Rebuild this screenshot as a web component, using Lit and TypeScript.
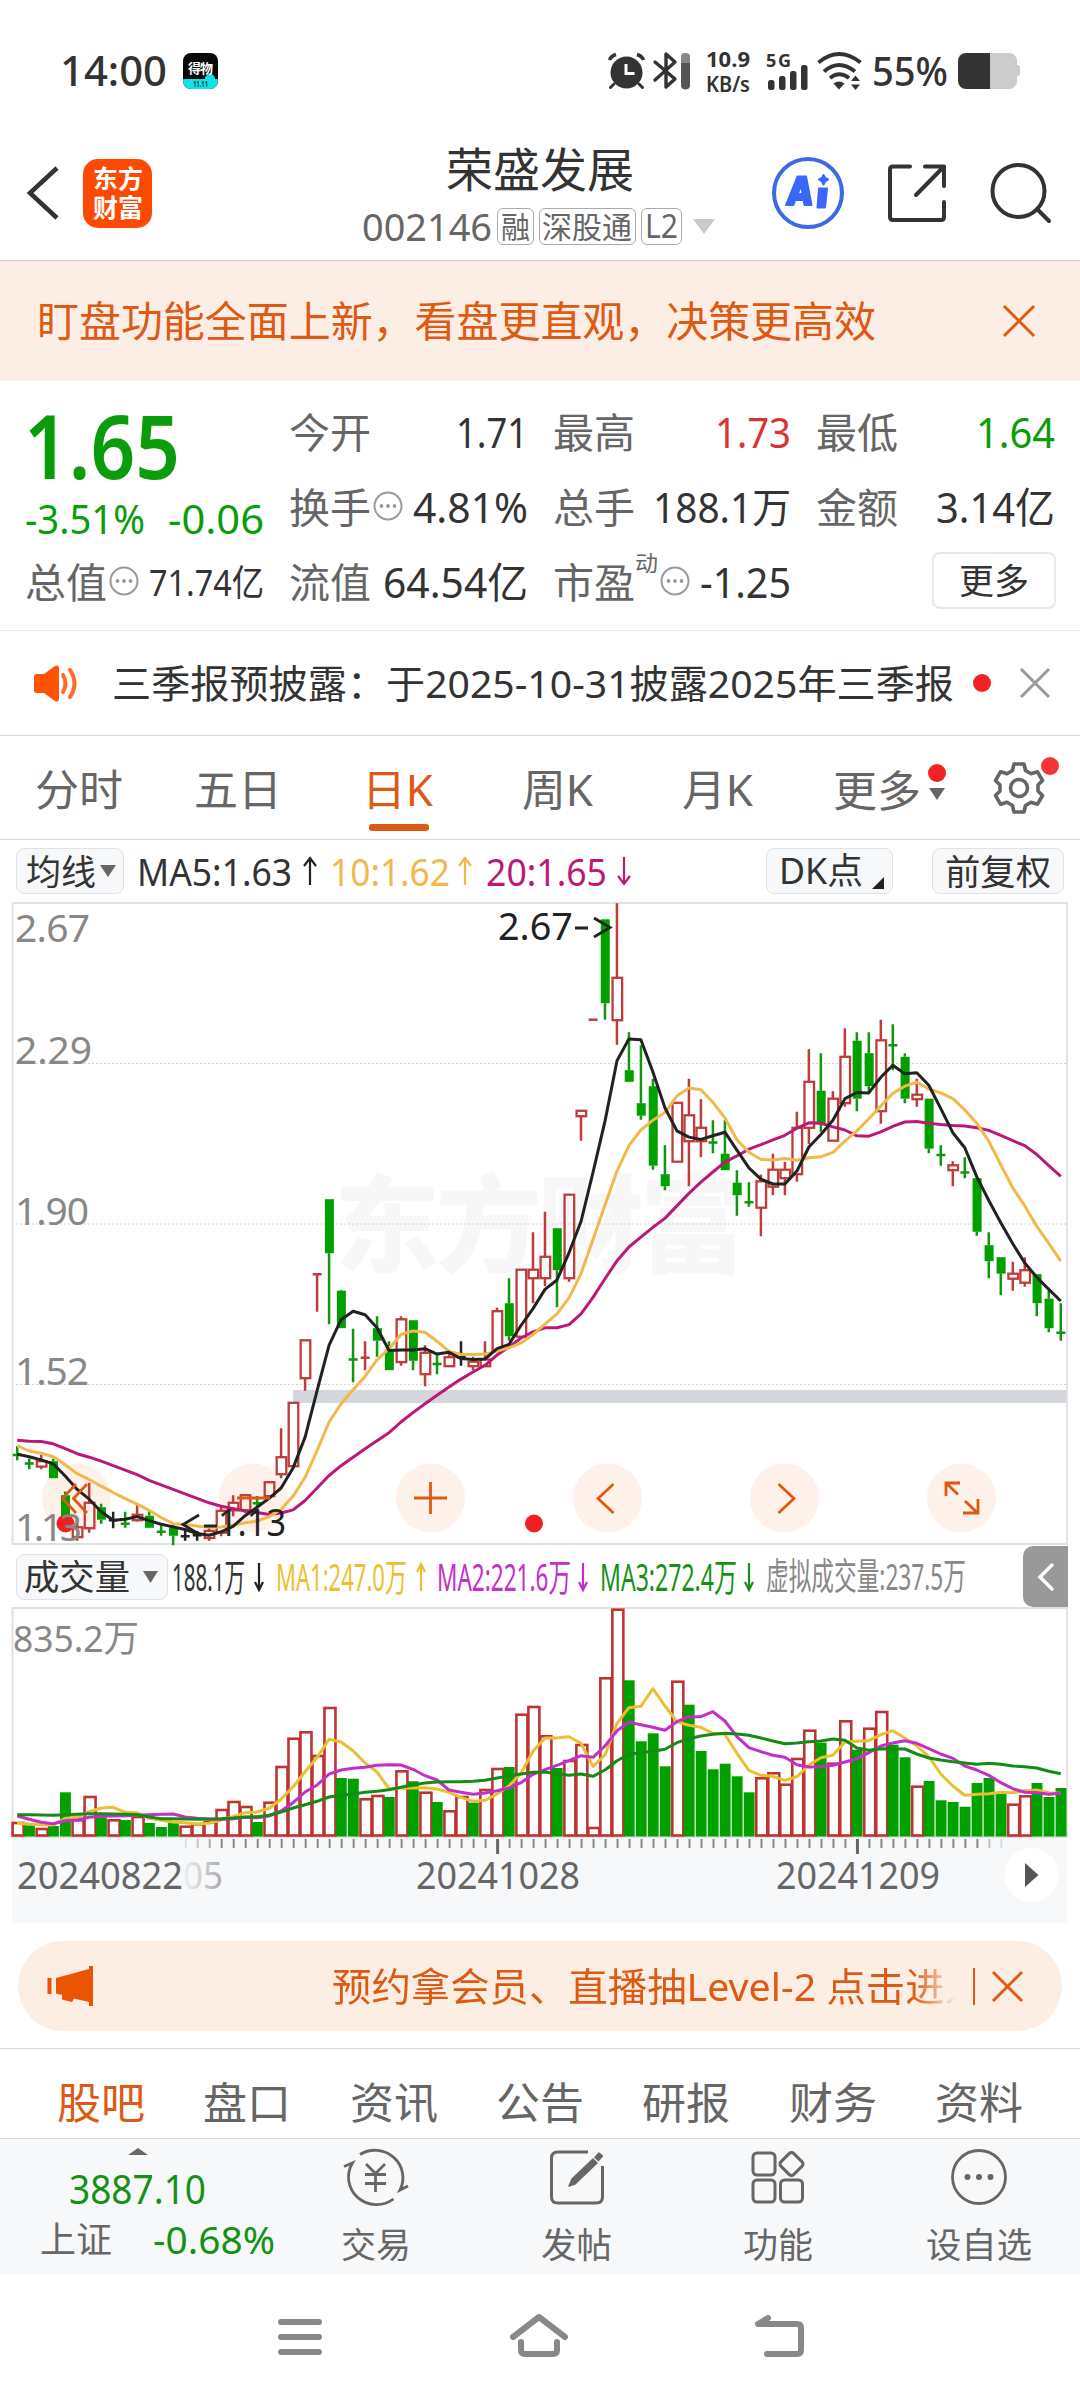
import { LitElement, html, svg, css, nothing } from "lit";
import { customElement } from "lit/decorators.js";

/** One line of text drawn at an exact advance width, centred on its cap height. */
const txt = (s: string, width: number, size: number, cls = "") => html`
  <svg class="txt ${cls}" width=${width} height=${Math.round(size * 1.16)}>
    <text x="0" y=${(Math.round(size * 1.16) / 2 + size * 0.372).toFixed(1)} font-size=${size}
      textLength=${width} lengthAdjust="spacingAndGlyphs">${s}</text>
  </svg>`;

const base = css`
  :host { display: block; font-family: "Noto Sans", "Noto Sans CJK SC", sans-serif; }
  * { box-sizing: border-box; }
  svg { display: block; flex: none; overflow: visible; }
  text { font-family: "Noto Sans", "Noto Sans CJK SC", sans-serif; white-space: pre; }
  .txt { fill: #333; }
  .txt.gray { fill: #666; }
  .txt.mute { fill: #888; }
  .txt.green { fill: #0a9c0a; }
  .txt.red { fill: #d93333; }
  .txt.orange { fill: #dc5a14; }
  .txt.bold { font-weight: 700; }
  .txt.semi { font-weight: 600; }
  .txt.mid { font-weight: 500; }
  .txt.white { fill: #fff; }
`;

/* ---------- price data: kind, body top, body bottom, high, low (2.24 ticks per px) ---------- */
type Candle = [string, number, number, number, number];
const candles: Candle[] = [
  ["g",1288,1288,1268,1300],["g",1307,1307,1296,1320],["r",1302,1314,1288,1320],["g",1302,1340,1296,1340],
  ["g",1378,1430,1370,1440],["r",1450,1472,1430,1480],["r",1395,1452,1350,1462],["g",1405,1433,1397,1442],
  ["k",1434,1434,1415,1452],["g",1442,1442,1415,1451],["r",1422,1434,1398,1437],["g",1424,1451,1414,1451],
  ["g",1460,1460,1446,1469],["g",1450,1469,1442,1490],["k",1470,1470,1458,1480],["k",1468,1468,1458,1480],
  ["r",1458,1474,1450,1480],["r",1413,1462,1405,1470],["r",1395,1412,1378,1425],["r",1378,1412,1376,1418],
  ["g",1396,1396,1380,1408],["r",1349,1380,1349,1384],["r",1293,1331,1228,1340],["r",1171,1313,1171,1313],
  ["r",1031,1116,1031,1144],["r",883,883,883,967],["g",715,836,715,995],["g",920,1004,918,1004],
  ["g",1074,1074,1005,1125],["r",1070,1070,1033,1098],["g",1004,1032,977,1068],["g",1052,1098,1033,1098],
  ["r",984,1080,977,1088],["g",986,1077,986,1098],["r",1059,1107,1042,1134],["g",1084,1084,1062,1107],
  ["r",1069,1089,1062,1089],["k",1069,1069,1033,1088],["r",1079,1089,1068,1098],["r",1074,1089,1033,1089],
  ["r",966,1055,958,1055],["g",948,1022,892,1032],["r",873,1023,873,1023],["r",873,892,789,948],
  ["r",844,892,743,910],["g",780,874,780,957],["r",705,892,705,900],["r",517,529,517,584],
  ["r",313,313,313,313],["g",88,276,88,313],["r",219,314,52,369],["g",426,452,341,452],
  ["g",500,528,370,537],["g",462,640,445,649],["g",659,686,594,695],["r",499,631,499,631],
  ["r",527,585,445,686],["r",555,585,491,621],["g",588,588,538,612],["g",613,650,538,650],
  ["g",678,706,650,752],["g",722,722,677,732],["r",675,734,660,798],["r",649,687,613,706],
  ["r",649,668,632,706],["r",555,659,519,676],["r",452,555,379,592],["g",472,547,388,564],
  ["r",490,584,473,584],["r",396,500,332,508],["g",360,490,341,518],["g",388,462,341,478],
  ["r",359,518,313,546],["g",370,370,323,426],["g",396,490,388,500],["r",481,491,445,508],
  ["g",490,602,490,612],["g",616,616,594,640],["r",639,650,630,686],["g",655,655,621,668],
  ["g",668,788,668,797],["g",818,854,789,892],["g",845,882,845,930],["r",882,893,855,920],
  ["r",874,902,845,911],["g",883,948,883,977],["g",938,1004,920,1013],["g",1014,1014,948,1032],
];
const MA5 = [1286,1292,1299,1308,1335,1365,1387,1415,1434,1432,1426,1435,1443,1449,1455,1464,1468,1460,1448,1424,1405,1385,1362,1317,1248,1144,1042,985,966,974,1003,1054,1053,1053,1050,1062,1058,1072,1074,1073,1050,1040,998,960,917,896,835,765,655,540,405,356,358,430,510,562,576,581,573,565,605,645,670,681,681,652,598,570,538,490,476,477,442,415,434,432,460,512,566,600,665,718,768,815,858,890,917,943];
const MA10 = [1267,1279,1284,1292,1310,1330,1343,1358,1372,1386,1398,1412,1428,1442,1444,1447,1450,1449,1445,1440,1436,1426,1410,1380,1338,1278,1214,1173,1142,1112,1075,1050,1018,1010,1013,1033,1056,1063,1063,1062,1055,1048,1037,1018,995,972,936,882,805,728,652,595,560,538,521,484,466,470,498,533,582,610,626,627,624,628,622,620,610,585,562,535,506,478,462,453,468,477,490,515,545,585,638,690,730,776,814,854];
const MA20 = [1255,1257,1258,1263,1274,1285,1293,1302,1312,1322,1332,1345,1355,1365,1375,1385,1395,1403,1408,1413,1417,1421,1418,1411,1390,1362,1334,1312,1293,1274,1256,1238,1214,1193,1173,1154,1136,1118,1102,1087,1064,1046,1026,1012,1003,1003,996,972,935,893,853,822,800,778,758,730,702,677,654,632,618,603,593,582,572,556,544,545,553,560,573,574,564,552,542,541,545,548,550,551,555,561,572,584,595,615,640,664];

/* ---------- volume data: bar top, three averages (3 ticks per px) ---------- */
const VOL = "r846 g856 r864 g858 g757 r838 r768 g832 r838 g840 r828 g849 g861 g849 r857 r850 r844 r807 r783 r798 g846 r785 r678 r593 r574 r645 r501 g714 g716 r775 r765 g771 r691 g724 r755 g786 r811 r768 g788 r747 r684 g681 r521 r498 r586 g684 r660 r612 r861 r412 r206 g421 g604 g580 g679 r422 g494 g633 g688 g671 g709 g757 r712 r697 r731 r654 r569 g608 r668 r541 g629 r563 r513 g614 g652 r737 g723 g781 g786 g800 g729 g714 g762 r791 r766 g729 g771 g744".split(" ");
const VM1 = [850,852,854,855,835,832,815,804,802,817,818,835,841,846,848,852,850,840,830,818,816,805,778,740,695,652,598,606,632,669,696,746,745,744,743,747,757,772,784,781,762,738,700,634,594,594,590,610,679,645,550,503,499,446,498,545,556,562,580,583,640,691,706,709,721,710,675,653,646,606,604,602,584,572,594,618,650,702,738,766,763,761,757,758,752,750,758,760];
const VM2 = [828,838,847,851,842,840,832,829,828,827,826,824,823,822,831,835,838,838,836,832,833,828,813,788,756,735,702,690,685,682,676,674,675,688,707,720,750,757,763,759,752,744,728,703,689,676,662,647,652,618,572,547,554,562,571,545,530,530,515,543,590,623,635,646,652,674,681,680,676,666,656,638,618,609,602,610,626,642,655,678,690,706,728,746,757,758,763,760];
const VM3 = [824,824,825,826,824,823,821,821,822,823,824,831,836,836,837,838,837,836,834,831,830,826,816,804,794,784,771,766,762,757,754,749,742,735,729,726,725,725,724,721,714,708,702,697,696,701,706,702,709,690,662,643,638,634,628,608,596,588,583,580,582,586,594,603,611,609,605,603,597,601,624,631,626,627,627,642,654,660,665,669,673,670,673,678,680,684,694,701];

const cx = (i: number) => 17.2 + i * 11.995;
const py = (v: number) => +((v - 49.3) / 2.24).toFixed(1);
const vy = (v: number) => +((v - 201) / 3).toFixed(1);
const line = (a: number[], f: (v: number) => number, cls: string) =>
  svg`<polyline class="line ${cls}" points=${a.map((v, i) => `${cx(i).toFixed(1)},${f(v)}`).join(" ")} />`;

@customElement("price-chart")
export class PriceChart extends LitElement {
  static styles = [base, css`
    .g { fill: #00a000; stroke: #0f970f; }
    .r { fill: #fff; stroke: #be3c39; }
    .hollow { fill: none; stroke-width: 2.3; }
    .k { fill: #222; stroke: #222; }
    .wick { stroke-width: 2.5; }
    .solid { stroke: none; }
    .line { fill: none; stroke-width: 3; stroke-linejoin: round; }
    .black { stroke: #222; }
    .gold { stroke: #f2b84b; }
    .pink { stroke: #bb1878; }
    .frame { fill: none; stroke: #e2e2e2; stroke-width: 2; }
    .grid { stroke: #d2d2d2; stroke-width: 1; stroke-dasharray: 2 2; }
    .axis { fill: #888; }
    .mark { fill: #222; }
    .water { fill: #f7f7f7; font-family: "Noto Sans CJK SC", sans-serif; font-weight: 900; }
    .btn { fill: #fef1ea; }
    .glyph { fill: none; stroke: #dc5a14; stroke-width: 2.8; }
    .pointer { fill: none; stroke: #222; stroke-width: 2.8; }
    .dot { fill: #f02020; }
  `];

  candle([k, top, bot, hi, lo]: Candle, i: number) {
    const x = cx(i);
    const flat = top === bot;
    const wick = flat
      ? svg`<path class="wick ${k}" d="M${x} ${py(hi)}V${py(lo)}M${x - 4.4} ${py(top)}h9" />`
      : svg`<path class="wick ${k}" d="M${x} ${py(hi)}V${py(top)}M${x} ${py(bot)}V${py(lo)}" />`;
    if (flat) return wick;
    return svg`${wick}${k === "r"
      ? svg`<rect class="r hollow" x=${x - 4.4} y=${py(top)} width="9.6" height=${py(bot) - py(top)} />`
      : svg`<rect class="solid ${k}" x=${x - 4.2} y=${py(top)} width="9" height=${py(bot) - py(top)} />`}`;
  }

  render() {
    const btns = [76.5, 253, 430.5, 607.5, 784.5, 961.5];
    const glyphs = [
      "M76 582L62.500 596.500L76 611M87 582L73.500 596.500L87 611", "M237 596H270",
      "M414 596H447M430.500 580V612", "M613.500 582L598 596.500L613.500 611",
      "M778.500 582L794 596.500L778.500 611",
      "M946 594V581H960M947 582L958 592.500M978 597V611H963M976.500 610L965 599",
    ];
    return html`<svg width="1080" height="644" viewBox="0 0 1080 644">
      <text class="water" x="334" y="362" font-size="106" textLength="412">东方财富</text>
      <rect x="293" y="488" width="774" height="13" fill="#d3d6db" />
      ${[161.5, 322, 482.5].map((y) => svg`<line class="grid" x1="12" x2="1067" y1=${y} y2=${y} />`)}
      <rect class="frame" x="12.500" y="1" width="1054.500" height="641" />
      ${btns.map((x) => svg`<circle class="btn" cx=${x} cy="596" r="34.500" />`)}
      ${candles.map((c, i) => this.candle(c, i))}
      ${line(MA20, py, "pink")}${line(MA10, py, "gold")}${line(MA5, py, "black")}
      <text class="mark" x="498" y="38" font-size="39" textLength="75" lengthAdjust="spacingAndGlyphs">2.67</text>
      <path class="pointer" d="M575 26H588M594 16L610 25.500L594 35" />
      <text class="mark" x="218" y="634" font-size="39" textLength="68" lengthAdjust="spacingAndGlyphs">1.13</text>
      <path class="pointer" d="M204 624H217M199 613L183 622.500L199 632" />
      ${glyphs.map((d) => svg`<path class="glyph" d=${d} />`)}
      <circle class="dot" cx="65.500" cy="621.500" r="9" /><circle class="dot" cx="534" cy="621.500" r="9" />
      ${[["2.67", 39.5, 75], ["2.29", 162, 77], ["1.90", 322.5, 74], ["1.52", 483, 74], ["1.13", 639, 67]].map(
        ([s, y, w]) => svg`<text class="axis" x="15" y=${y} font-size="39" textLength=${w}>${s}</text>`)}
    </svg>`;
  }
}

@customElement("volume-chart")
export class VolumeChart extends LitElement {
  static styles = [base, css`
    .up { fill: #fff; stroke: #be3433; stroke-width: 2.6; }
    .down { fill: #00a000; }
    .line { fill: none; stroke-width: 3; stroke-linejoin: round; }
    .gold { stroke: #eac030; }
    .violet { stroke: #c32fc8; }
    .green { stroke: #168a16; }
    .frame { fill: none; stroke: #e2e2e2; stroke-width: 2; }
    .axis { fill: #888; }
    .panel { fill: #f7f8fa; }
    .tick { stroke: #888; stroke-width: 2; }
    .major { stroke: #666; stroke-width: 3; }
    .date { fill: #666; }
    .faded { fill: url(#fade); }
  `];

  render() {
    return html`<svg width="1080" height="316" viewBox="0 0 1080 316">
      <defs><linearGradient id="fade"><stop offset="0" stop-color="#f0f0f0" /><stop offset="1" stop-color="#aaa" /></linearGradient></defs>
      <rect class="panel" x="12" y="230" width="1055" height="86" />
      <rect class="frame" x="12.500" y="1" width="1054.500" height="229" />
      ${VOL.map((s, i) => {
        const y = vy(+s.slice(1));
        return s[0] === "r"
          ? svg`<rect class="up" x=${cx(i) - 4.6} y=${y + 1} width="11" height=${227.5 - y} />`
          : svg`<rect class="down" x=${cx(i) - 5.2} y=${y} width="10.900" height=${229.5 - y} />`;
      })}
      ${line(VM1, vy, "gold")}${line(VM2, vy, "violet")}${line(VM3, vy, "green")}
      ${Array.from({ length: 69 }, (_, k) => {
        const i = k + 14;
        const major = i === 40 || i === 70;
        const fade = i < 17 ? (i - 13) * 0.22 : i > 80 ? (83 - i) * 0.25 : 1;
        return svg`<line class=${major ? "major" : "tick"} opacity=${fade} x1=${cx(i) + 0.6} x2=${cx(i) + 0.6} y1="232" y2=${major ? 247 : 241} />`;
      })}
      <text class="axis" x="13" y="45" font-size="37" textLength="126" lengthAdjust="spacingAndGlyphs">835.2万</text>
      <text class="date" x="17" y="282" font-size="38.500" textLength="166" lengthAdjust="spacingAndGlyphs">20240822</text>
      <text class="faded" x="183" y="282" font-size="38.500" textLength="40" lengthAdjust="spacingAndGlyphs">05</text>
      <text class="date" x="416" y="282" font-size="38.500" textLength="164" lengthAdjust="spacingAndGlyphs">20241028</text>
      <text class="date" x="776" y="282" font-size="38.500" textLength="164" lengthAdjust="spacingAndGlyphs">20241209</text>
      <circle cx="1031.500" cy="268" r="27" fill="#fff" />
      <path d="M1025 256L1038.500 268L1025 280Z" fill="#555" />
    </svg>`;
  }
}

@customElement("app-root")
export class AppRoot extends LitElement {
  static styles = [base, css`
    :host { width: 1080px; height: 2400px; background: #fff; overflow: hidden; }
    .row { display: flex; align-items: center; }
    .status { height: 130px; padding: 12px 60px 0 60px; }
    .grow { flex: 1; }
    .app { width: 35px; height: 36px; margin-left: 16px; border-radius: 8px; overflow: hidden; }
    .bt { margin-left: 7px; }
    .speed { display: flex; flex-direction: column; margin-left: 15px; }
    .signal { margin-left: 16px; }
    .wifi { margin-left: 8px; }
    .pct { margin-left: 10px; }
    .batt { margin-left: 9px; }
    .header { height: 131px; padding: 0 29px 4px 27px; border-bottom: 1px solid #ccc; }
    .logo { width: 69px; height: 69px; margin-left: 24px; border-radius: 15px; background: #fd4a02;
      display: flex; flex: none; flex-direction: column; align-items: center; justify-content: center; }
    .title { width: 440px; margin-left: 168px; padding-top: 5px; display: flex; flex-direction: column; align-items: center; gap: 7px; }
    .codes { display: flex; align-items: center; gap: 5px; margin-left: -4px; }
    .tag { display: flex; align-items: center; justify-content: center; height: 37px; border: 1.5px solid #aaa; border-radius: 6px; }
    .tag.a { width: 37px; }
    .tag.b { width: 97px; }
    .tag.c { width: 41px; }
    .caret { margin-left: 6px; }
    .icons { display: flex; align-items: center; }
    .share { margin-left: 43px; }
    .search { margin-left: 45px; }
    .banner { height: 120px; padding: 0 45px 0 37px; background: #fceee5; justify-content: space-between; }
    .quote { height: 250px; padding: 14px 26px 0; border-bottom: 1px solid #e9e9e9;
      display: grid; grid-template-columns: 236px 237px 236px 237px; column-gap: 27px; }
    .last { display: flex; flex-direction: column; }
    .big { height: 101px; display: flex; align-items: center; margin-left: -2px; }
    .chg { height: 46px; justify-content: space-between; margin-left: -1px; margin-right: -2px; }
    .cell { height: 75px; display: flex; align-items: center; margin-right: -2px; }
    .last .cell { margin-top: 3px; margin-left: -1px; }
    .col { display: flex; flex-direction: column; }
    .info { margin: -4px 0 0 2px; }
    .sup { margin-top: -40px; }
    .more { width: 124px; height: 57px; margin: 7px -3px 0 auto; border: 2px solid #e6e8ea; border-radius: 8px;
      display: flex; align-items: center; justify-content: center; }
    .notice { height: 105px; padding: 0 30px 0 34px; border-bottom: 1px solid #d6d6d6; }
    .speech { margin-left: 34px; }
    .reddot { width: 18px; height: 18px; border-radius: 9px; background: #f02222; margin: 0 29px 0 19px; }
    .tabs { height: 104px; border-bottom: 1px solid #d6d6d6; }
    .tab { width: 159.600px; height: 103px; display: flex; flex-direction: column; align-items: center; padding-top: 29px; }
    .tab .txt { margin-left: -2px; }
    .bar { width: 60px; height: 7px; border-radius: 3px; background: #dc5a14; margin-top: 9px; }
    .moretab { margin-left: 35px; padding-top: 6px; }
    .drop { display: flex; flex-direction: column; align-items: center; gap: 6px; margin: 0 0 11px 7px; }
    .drop i { width: 18px; height: 18px; border-radius: 9px; background: #f02222; }
    .gear { position: relative; margin-left: 47px; }
    .gear i { position: absolute; left: 48px; top: -5px; width: 18px; height: 18px; border-radius: 9px; background: #f53535; }
    .indic { height: 62px; padding: 0 16px; }
    .chip { height: 46px; border: 1.500px solid #dfe3e8; border-radius: 8px; background: #f7f8fa; display: flex; align-items: center; }
    .pick { width: 108px; padding-left: 9px; gap: 4px; }
    .dk { width: 127px; padding-left: 12px; gap: 9px; }
    .corner { margin-top: 24px; }
    .fq { width: 132px; justify-content: center; margin-left: 39px; }
    .m4 { margin-left: 4px; } .m7 { margin-left: 7px; } .m8 { margin-left: 8px; } .m9 { margin-left: 9px; }
    .m10 { margin-left: 10px; } .m11 { margin-left: 11px; } .m12 { margin-left: 12px; } .m13 { margin-left: 13px; } .m14 { margin-left: 14px; }
    .volrow { height: 61px; padding-left: 16px; }
    .volpick { width: 152px; padding-left: 7px; gap: 13px; }
    .fold { width: 45px; height: 61px; border-radius: 10px 0 0 10px; background: #999; margin-left: auto; margin-right: 12px;
      display: flex; align-items: center; justify-content: center; }
    .txt.gold { fill: #f2b84b; }
    .txt.pink { fill: #bb1878; }
    .txt.yellow { fill: #eac030; }
    .txt.violet { fill: #c32fc8; }
    .txt.leaf { fill: #169016; }
    .promo { height: 90px; margin: 18px 18px 17px; padding: 0 38px 0 29px; border-radius: 45px; background: #fdeee4; }
    .promotext { width: 624px; margin-left: 239px; overflow: hidden;
      -webkit-mask-image: linear-gradient(90deg, #000 93%, transparent 100%); mask-image: linear-gradient(90deg, #000 93%, transparent 100%); }
    .sep { width: 2px; height: 37px; background: #dc5a14; margin: 0 17px; }
    .subtabs { height: 91px; padding: 15px 28px 0; border-top: 1px solid #d6d6d6; border-bottom: 1px solid #d6d6d6; }
    .subtab { width: 146.300px; height: 76px; padding-top: 15px; display: flex; justify-content: center; }
    .footer { height: 135px; background: #f7f8fa; align-items: flex-start; }
    .index { width: 275px; height: 135px; display: flex; flex-direction: column; align-items: center; padding-top: 9px; gap: 6px; }
    .points { margin-top: 5px; }
    .idx { width: 235px; justify-content: space-between; margin-left: 40px; }
    .act { width: 201.300px; display: flex; flex-direction: column; align-items: center; padding-top: 9px; gap: 18px; }
    .nav { height: 126px; padding: 0 276px 2px 277px; justify-content: space-between; }
  `];

  info() {
    return html`<svg class="info" width="30" height="30" fill="#999">
      <circle cx="15" cy="15" r="13.500" fill="none" stroke="#999" stroke-width="2" />
      <circle cx="8.500" cy="15" r="1.900" /><circle cx="15" cy="15" r="1.900" /><circle cx="21.500" cy="15" r="1.900" /></svg>`;
  }
  tri(w: number, h: number, c: string) {
    return html`<svg width=${w} height=${h} fill=${c}><path d="M0 0H${w}L${w / 2} ${h}Z" /></svg>`;
  }
  cross(s: number, c: string, sw = 3) {
    return html`<svg width=${s} height=${s}><path d="M1 1L${s - 1} ${s - 1}M${s - 1} 1L1 ${s - 1}" stroke=${c} stroke-width=${sw} /></svg>`;
  }
  arrow(up: boolean, w: number, c: string) {
    const m = w / 2;
    return html`<svg width=${w} height="28" fill="none" stroke=${c} stroke-width="2.200">
      <path d=${up ? `M${m} 28V1M1 9L${m} 1L${w - 1} 9` : `M${m} 0V27M1 19L${m} 27L${w - 1} 19`} /></svg>`;
  }

  status() {
    return html`<div class="row status">
      ${txt("14:00", 107, 41, "mid")}
      <svg class="app" viewBox="0 0 35 36"><rect width="35" height="36" fill="#080808" /><rect y="26" width="35" height="10" fill="#12e2e4" />
        <path d="M22 27a5 5 0 0 1 10 -2V30H22Z" fill="#12e2e4" />
        <text x="5" y="20" font-size="13" font-weight="700" fill="#fff" textLength="25">得物</text>
        <text x="10" y="34" font-size="8" font-weight="700" fill="#044" textLength="15" lengthAdjust="spacingAndGlyphs">11.11</text></svg>
      <div class="grow"></div>
      <svg width="38" height="38" viewBox="0 0 38 38"><circle cx="18.500" cy="20.500" r="16" fill="#333" />
        <path d="M6 32L2.500 35.500M31 32L34.500 35.500" stroke="#333" stroke-width="3" stroke-linecap="round" />
        <path d="M1.500 8Q3 4 8 2.500M35.500 8Q34 4 29 2.500" stroke="#333" stroke-width="3.500" fill="none" />
        <path d="M18 12V21.500H26.500" stroke="#fff" stroke-width="3" fill="none" /></svg>
      <svg class="bt" width="38" height="38" viewBox="0 0 38 38"><path d="M2 10L22 27L13 35V2L22 10L2 28" fill="none" stroke="#333" stroke-width="3.400" stroke-linejoin="round" stroke-linecap="round" />
        <rect x="28" y="1" width="9" height="36" rx="4" fill="#888" /><path d="M28 11H37V33a4 4 0 0 1 -9 0Z" fill="#555" /></svg>
      <div class="speed">${txt("10.9", 44, 22, "bold")}${txt("KB/s", 44, 21, "semi")}</div>
      <svg class="signal" width="43" height="38" viewBox="0 0 43 38" fill="#333">
        <text x="0" y="15" font-size="18" font-weight="700" textLength="25">5G</text>
        <rect x="2" y="28" width="6.500" height="10" rx="2.500" /><rect x="13" y="24" width="6.500" height="14" rx="2.500" />
        <rect x="24" y="19" width="6.500" height="19" rx="2.500" /><rect x="35" y="13" width="6.500" height="25" rx="2.500" /></svg>
      <svg class="wifi" width="45" height="38" viewBox="0 0 45 38" fill="none" stroke="#333" stroke-width="3.800">
        <path d="M1.500 10.500Q22 -6.500 43.500 10.500M7 19.500Q22 6.500 38 19.500M13 26Q22 18.500 32 26" />
        <path d="M16.500 31.500Q22 27.500 27.500 31.500L22 37.500ZM34 29L38.500 23.500L43 29ZM34 32.500L38.500 38L43 32.500Z" fill="#333" stroke="none" /></svg>
      <div class="pct">${txt("55%", 76, 39, "mid")}</div>
      <svg class="batt" width="63" height="37" viewBox="0 0 63 37"><path d="M32 0H52a8 8 0 0 1 8 8V12h1a2 2 0 0 1 2 2v7a2 2 0 0 1 -2 2h-1v5a8 8 0 0 1 -8 8H32Z" fill="#ccc" />
        <path d="M33 0H9a8 8 0 0 0 -8 8V28a8 8 0 0 0 8 8H33Z" fill="#333" /></svg>
    </div>`;
  }

  header() {
    return html`<div class="row header">
      <svg width="32" height="54"><path d="M30 2L3 27L30 52" fill="none" stroke="#333" stroke-width="4.500" /></svg>
      <div class="logo">${txt("东方", 50, 25, "semi white")}${txt("财富", 50, 25, "semi white")}</div>
      <div class="title">
        ${txt("荣盛发展", 188, 47)}
        <div class="codes">${txt("002146", 130, 38.5, "gray")}
          <div class="tag a">${txt("融", 29, 30, "gray")}</div><div class="tag b">${txt("深股通", 90, 30, "gray")}</div>
          <div class="tag c">${txt("L2", 33, 32, "gray")}</div><div class="caret">${this.tri(22, 15, "#c8c8c8")}</div></div>
      </div>
      <div class="grow"></div>
      <div class="icons">
        <svg width="74" height="74" viewBox="0 0 74 74"><circle cx="37" cy="37" r="34" fill="none" stroke="#3f68e4" stroke-width="4" />
          <path fill="#3a66fb" fill-rule="evenodd" stroke="#3a66fb" stroke-width="2" stroke-linejoin="round" d="M15 49L26.500 20.500H35L40.500 49H33.500L32.500 44H24L22.500 49ZM26.500 38H31.500L30.500 29ZM48 32.500H56L54 51.500H46.500ZM52.500 19L54 22L57 23.500L54 25.500L52.500 28.500L51 25.500L48 23.500L51 22Z" /></svg>
        <svg class="share" width="58" height="58" viewBox="0 0 58 58" fill="none" stroke="#333" stroke-width="4" stroke-linecap="round" stroke-linejoin="round">
          <path d="M22 2.500H5Q2 2.500 2 5.500V53Q2 56 5 56H53Q56 56 56 53V38M37 2.500H56V22M56 2.500L28 31" /></svg>
        <svg class="search" width="60" height="60" viewBox="0 0 60 60" fill="none" stroke="#333" stroke-width="4" stroke-linecap="round">
          <circle cx="27.500" cy="28" r="26" /><path d="M46 46L58 58" /></svg>
      </div>
    </div>`;
  }

  stat(label: string, value: string, w: number, cls = "", icon: unknown = nothing) {
    return html`<div class="cell">${txt(label, 82, 41, "gray")}${icon}<div class="grow"></div>${txt(value, w, 42, cls)}</div>`;
  }

  quote() {
    return html`<div class="quote">
      <div class="last">
        <div class="big">${txt("1.65", 156, 89, "green semi")}</div>
        <div class="row chg">${txt("-3.51%", 120, 40, "green")}${txt("-0.06", 96, 40, "green")}</div>
        <div class="cell">${txt("总值", 82, 41, "gray")}${this.info()}<div class="grow"></div>${txt("71.74亿", 115, 36)}</div>
      </div>
      <div class="col">${this.stat("今开", "1.71", 72)}${this.stat("换手", "4.81%", 115, "", this.info())}${this.stat("流值", "64.54亿", 145)}</div>
      <div class="col">${this.stat("最高", "1.73", 76, "red")}${this.stat("总手", "188.1万", 138)}${this.stat("市盈", "-1.25", 91, "",
        html`<div class="sup">${txt("动", 23, 22, "gray")}</div>${this.info()}`)}</div>
      <div class="col">${this.stat("最低", "1.64", 79, "green")}${this.stat("金额", "3.14亿", 119)}<div class="more">${txt("更多", 70, 35)}</div></div>
    </div>`;
  }

  tabs() {
    return html`<div class="row tabs">
      ${["分时", "五日", "日K", "周K", "月K"].map((t) => html`<div class="tab">
        ${txt(t, t.endsWith("K") ? 71 : 88, 43.5, t === "日K" ? "orange" : "gray")}
        ${t === "日K" ? html`<div class="bar"></div>` : nothing}</div>`)}
      <div class="row moretab">${txt("更多", 88, 43.5, "gray")}</div>
      <div class="drop"><i></i>${this.tri(16, 12, "#666")}</div>
      <div class="gear"><svg width="52" height="52" viewBox="0 0 52 52" fill="none" stroke="#666" stroke-width="3.600" stroke-linejoin="round">
        <path d="M21 2H31L32.500 8.500L38 11.700L44.500 9.800L49.500 18.500L45 23V29L49.500 33.500L44.500 42.200L38 40.300L32.500 43.500L31 50H21L19.500 43.500L14 40.300L7.500 42.200L2.500 33.500L7 29V23L2.500 18.500L7.500 9.800L14 11.700L19.500 8.500Z" />
        <circle cx="26" cy="26" r="8.500" /></svg><i></i></div>
    </div>`;
  }

  render() {
    return html`
      ${this.status()}${this.header()}
      <div class="row banner">${txt("盯盘功能全面上新，看盘更直观，决策更高效", 839, 42, "orange")}${this.cross(32, "#e05a10")}</div>
      ${this.quote()}
      <div class="row notice">
        <svg width="44" height="37" viewBox="0 0 44 37"><path d="M3 9H10L21 1Q25 -1 25 4V33Q25 38 21 36L10 28H3Q0 28 0 25V12Q0 9 3 9Z" fill="#fe5304" />
          <path d="M29 10Q34 18.500 29 27M36 5Q45 18.500 36 32" fill="none" stroke="#fe6c28" stroke-width="4" stroke-linecap="round" /></svg>
        <div class="speech">${txt("三季报预披露：于2025-10-31披露2025年三季报", 842, 38.5)}</div>
        <div class="reddot"></div><div class="grow"></div>${this.cross(30, "#999")}
      </div>
      ${this.tabs()}
      <div class="row indic">
        <div class="chip pick">${txt("均线", 70, 35)}${this.tri(16, 12, "#666")}</div>
        <div class="m13">${txt("MA5:1.63", 155, 39)}</div><div class="m11">${this.arrow(true, 14, "#222")}</div>
        <div class="m13">${txt("10:1.62", 120, 39, "gold")}</div><div class="m8">${this.arrow(true, 14, "#f2b84b")}</div>
        <div class="m14">${txt("20:1.65", 121, 39, "pink")}</div><div class="m10">${this.arrow(false, 14, "#bb1878")}</div>
        <div class="grow"></div>
        <div class="chip dk">${txt("DK点", 84, 36)}<svg class="corner" width="12" height="12"><path d="M12 0V12H0Z" fill="#222" /></svg></div>
        <div class="chip fq">${txt("前复权", 106, 35.5)}</div>
      </div>
      <price-chart></price-chart>
      <div class="row volrow">
        <div class="chip volpick">${txt("成交量", 106, 35.5)}${this.tri(15, 12, "#666")}</div>
        <div class="m4">${txt("188.1万", 73, 38)}</div><div class="m9">${this.arrow(false, 10, "#222")}</div>
        <div class="m12">${txt("MA1:247.0万", 131, 38, "yellow")}</div><div class="m9">${this.arrow(true, 10, "#eac030")}</div>
        <div class="m11">${txt("MA2:221.6万", 134, 38, "violet")}</div><div class="m7">${this.arrow(false, 10, "#c32fc8")}</div>
        <div class="m12">${txt("MA3:272.4万", 137, 38, "leaf")}</div><div class="m7">${this.arrow(false, 10, "#169016")}</div>
        <div class="m12">${txt("虚拟成交量:237.5万", 200, 37, "mute")}</div>
        <div class="fold"><svg width="16" height="28"><path d="M14 2L2 14L14 26" fill="none" stroke="#fff" stroke-width="3.500" stroke-linecap="round" /></svg></div>
      </div>
      <volume-chart></volume-chart>
      <div class="row promo">
        <svg width="46" height="40" viewBox="0 0 46 40" fill="#ea5504"><path d="M0.500 12H4.500V28H0.500ZM9 12L42 3V0H46V40H42V36L27 32.500L25 36L15 33.500V29L9 27.500Z" /></svg>
        <div class="promotext">${txt("预约拿会员、直播抽Level-2 点击进入", 652, 39, "orange")}</div>
        <div class="sep"></div>${this.cross(31, "#e05a10")}
      </div>
      <div class="row subtabs">${["股吧", "盘口", "资讯", "公告", "研报", "财务", "资料"].map(
        (t, i) => html`<div class="subtab">${txt(t, 88, 43.5, i ? "gray" : "orange")}</div>`)}</div>
      <div class="row footer">
        <div class="index"><svg width="20" height="7"><path d="M0 7L10 0L20 7Z" fill="#666" /></svg>
          <div class="points">${txt("3887.10", 137, 39.5, "leaf")}</div>
          <div class="row idx">${txt("上证", 72, 36, "gray")}${txt("-0.68%", 122, 38, "leaf")}</div></div>
        <div class="act">
          <svg width="66" height="58" viewBox="0 0 66 58" fill="none" stroke="#666" stroke-width="2.800"><path d="M17 6.500A28 27.500 0 0 1 57 42L65 38M50.500 51A28 27.500 0 0 1 9.500 15L1 18.500" />
            <path d="M23 16L32.500 25.500L42 16M32.500 25V44M22 26.500H43M22 35.500H43" /></svg>
          ${txt("交易", 70, 35.5, "gray")}</div>
        <div class="act">
          <svg width="56" height="58" viewBox="0 0 56 58" fill="none" stroke="#666" stroke-width="3"><path d="M39 4H9Q2.500 4 2.500 10V49Q2.500 55 9 55H47Q53.500 55 53.500 49V18" />
            <path d="M20 38L23 31L44 11L48 15L26 36ZM46 9.500L50 5L53.500 8L49.500 12.500Z" fill="#666" stroke="#666" stroke-width="1.500" stroke-linejoin="round" /></svg>
          ${txt("发帖", 71, 35.5, "gray")}</div>
        <div class="act">
          <svg width="54" height="58" viewBox="0 0 54 58" fill="none" stroke="#666" stroke-width="3" stroke-linejoin="round"><rect x="2" y="5" width="22" height="22" rx="4" /><rect x="2" y="32" width="22" height="22" rx="4" />
            <rect x="29.500" y="32" width="22" height="22" rx="4" /><rect x="31.500" y="7" width="18" height="18" rx="3" transform="rotate(45 40.500 16)" /></svg>
          ${txt("功能", 70, 35.5, "gray")}</div>
        <div class="act">
          <svg width="56" height="58" viewBox="0 0 56 58" fill="#666"><circle cx="28" cy="29" r="26.500" fill="none" stroke="#666" stroke-width="2.800" />
            <circle cx="16.500" cy="29" r="3" /><circle cx="28" cy="29" r="3" /><circle cx="39.500" cy="29" r="3" /></svg>
          ${txt("设自选", 106, 35.5, "gray")}</div>
      </div>
      <div class="row nav">
        <svg width="46" height="40" stroke="#888" stroke-width="6" stroke-linecap="round"><path d="M4 6H42M4 21H42M4 36H42" /></svg>
        <svg width="58" height="44" fill="none" stroke="#888" stroke-width="6" stroke-linecap="round" stroke-linejoin="round"><path d="M3 23L29 3L55 23M11 28V36Q11 40 15 40H43Q47 40 47 36V28" /></svg>
        <svg width="49" height="44" fill="none" stroke="#888" stroke-width="6" stroke-linecap="round" stroke-linejoin="round"><path d="M13 4L3 10H42Q46 10 46 14V36Q46 40 42 40H12" /></svg>
      </div>`;
  }
}
